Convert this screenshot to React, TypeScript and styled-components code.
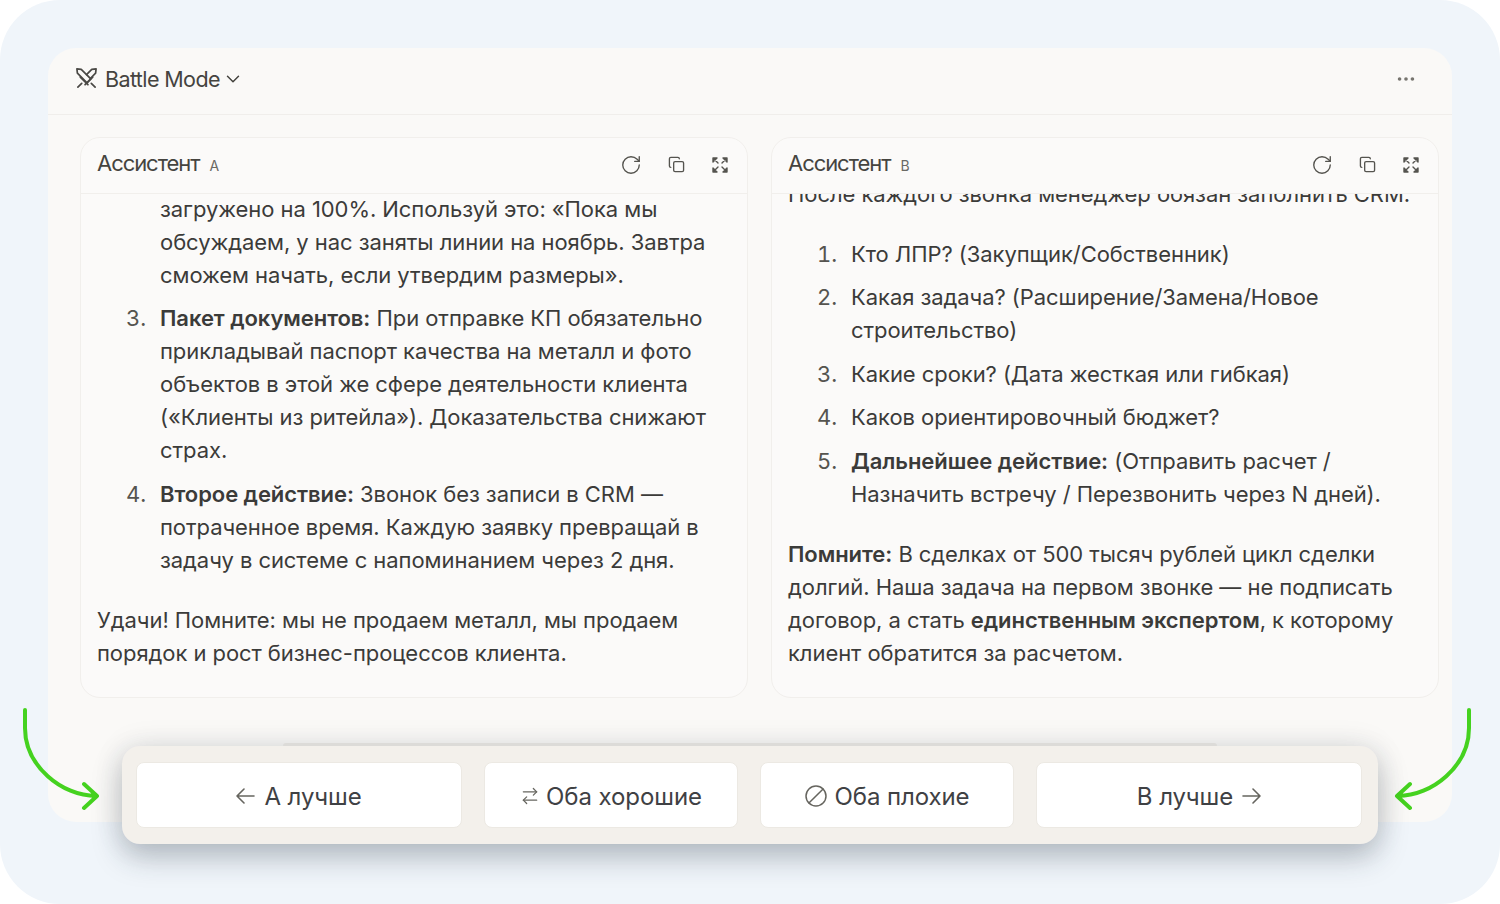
import styled, { createGlobalStyle } from 'styled-components';
import { ArrowRightLeft, Ban, ChevronDown, Copy, Ellipsis, RotateCw } from 'lucide-react';

const GlobalStyle = createGlobalStyle`
  html, body {
    margin: 0;
    padding: 0;
    height: 100%;
    background: #ffffff;
  }
  body {
    font-family: Inter, "Noto Sans", sans-serif;
    color: #3b3b39;
  }
`;

const Backdrop = styled.div`
  position: relative;
  width: 1500px;
  height: 904px;
  box-sizing: border-box;
  padding: 48px 48px 82px;
  background: #f0f5fa;
  border-radius: 60px;
  overflow: hidden;
`;

const Window = styled.div`
  height: 774px;
  background: #faf9f7;
  border-radius: 28px;
  overflow: hidden;
`;

const TopBar = styled.div`
  display: flex;
  align-items: center;
  justify-content: space-between;
  height: 67px;
  box-sizing: border-box;
  padding: 0 35px 5px 27px;
  border-bottom: 1px solid #f0eeeb;
`;

const ModeTitle = styled.div`
  display: flex;
  align-items: center;
  font-size: 21.5px;
  letter-spacing: -0.6px;
  color: #45443f;
  svg { flex: none; }
`;

const ModeLabel = styled.span`
  margin: 0 2px 0 7px;
`;

const Panels = styled.div`
  display: grid;
  grid-template-columns: 668px 668px;
  gap: 23px;
  padding: 22px 14px 0 32px;
`;

const Panel = styled.section`
  display: flex;
  flex-direction: column;
  height: 561px;
  box-sizing: border-box;
  background: #fbfaf9;
  border: 1px solid #f1efec;
  border-radius: 20px;
  overflow: hidden;
`;

const PanelHead = styled.header`
  display: flex;
  align-items: center;
  justify-content: space-between;
  flex: none;
  height: 56px;
  box-sizing: border-box;
  padding: 0 18px 2px 16px;
  border-bottom: 1px solid #f1efec;
`;

const PanelName = styled.div`
  display: flex;
  align-items: baseline;
  gap: 10px;
  padding-bottom: 4px;
  font-size: 22px;
  letter-spacing: -1.05px;
  color: #45443f;
`;

const PanelLetter = styled.span`
  font-size: 14px;
  letter-spacing: 0;
  color: #6a6964;
`;

const PanelTools = styled.div`
  display: flex;
  align-items: center;
  gap: 26px;
  color: #55544f;
`;

const PanelBody = styled.div`
  flex: 1;
  min-height: 0;
  display: flex;
  flex-direction: column;
  justify-content: flex-end;
  box-sizing: border-box;
  padding: 0 16px 27px;
  overflow: hidden;
  font-size: 22px;
  line-height: 33px;
  letter-spacing: -0.06px;
  b { font-weight: 600; }
`;

const Paragraph = styled.p`
  margin: 0;
  flex: none;
`;

const Steps = styled.ol`
  flex: none;
  margin: 27px 0;
  padding: 0 0 0 55px;
`;

const Step = styled.li`
  padding-left: 8px;
  & + & {
    margin-top: 10.6px;
  }
  &::marker {
    color: #55544f;
  }
`;

const VoteBar = styled.div`
  position: absolute;
  left: 122px;
  top: 746px;
  width: 1256px;
  height: 98px;
  box-sizing: border-box;
  display: grid;
  grid-template-columns: 326px 254px 254px 326px;
  gap: 22px;
  padding: 16px 16px 16px 14px;
  background: #f3f0eb;
  border-radius: 18px;
  box-shadow: 0 0 30px rgba(40, 50, 60, 0.1), 0 13px 30px rgba(30, 45, 60, 0.27);

  &::before {
    content: '';
    position: absolute;
    left: 161px;
    right: 161px;
    top: -3px;
    height: 3px;
    border-radius: 4px 4px 0 0;
    background: #dcdbd8;
  }
`;

const VoteButton = styled.button<{ $tight?: boolean }>`
  display: flex;
  align-items: center;
  justify-content: center;
  gap: ${(p) => (p.$tight ? '6px' : '9px')};
  padding: 2px 0 0;
  background: #ffffff;
  border: 1.5px solid #ece9e3;
  border-radius: 8px;
  font-family: inherit;
  font-size: 24px;
  letter-spacing: -0.08px;
  color: #3f4144;
  svg { color: #66655f; flex: none; }
`;

const MirroredBan = styled(Ban)`
  transform: scaleX(-1);
`;

const CurvedArrow = styled.svg<{ $right?: boolean }>`
  position: absolute;
  top: 706px;
  left: ${(p) => (p.$right ? '1392px' : '22px')};
  transform: ${(p) => (p.$right ? 'scaleX(-1)' : 'none')};
`;

function GreenArrow({ right }: { right?: boolean }) {
  return (
    <CurvedArrow $right={right} width="80" height="106" viewBox="0 0 80 106" fill="none">
      <path
        d="M3 4 V22 C3 60 40 90 74 90 M62 78 L75 90 L62 102"
        stroke="#45d21f"
        strokeWidth="4"
        strokeLinecap="round"
        strokeLinejoin="round"
      />
    </CurvedArrow>
  );
}

function SwordsIcon() {
  return (
    <svg width="23" height="23" viewBox="0 0 24 24" fill="none" stroke="#4a4945" strokeWidth="1.8" strokeLinejoin="round" strokeLinecap="round">
      <path d="M2 2 L6.5 2.5 L16.5 12.5 L12.5 16.5 L2.5 6.5 Z" />
      <path d="M22 2 L17.5 2.5 L12 8 M16 12 L21.5 6.5 L22 2" />
      <path d="M10.5 18.5 L18.5 10.5 M17 17 L21 21" />
      <path d="M5.5 10.5 L13.5 18.5 M7 17 L3 21" />
    </svg>
  );
}

function ExpandIcon() {
  return (
    <svg width="18" height="18" viewBox="0 0 18 18" fill="#55544f" stroke="#55544f" strokeWidth="1.4" strokeLinecap="round" strokeLinejoin="round">
      <path d="M2 2 H6 L2 6 Z M3 3 L7 7" />
      <path d="M16 2 H12 L16 6 Z M15 3 L11 7" />
      <path d="M2 16 H6 L2 12 Z M3 15 L7 11" />
      <path d="M16 16 H12 L16 12 Z M15 15 L11 11" />
    </svg>
  );
}

function LongArrow({ right }: { right?: boolean }) {
  return (
    <svg width="19" height="16" viewBox="0 0 19 16" fill="none" stroke="currentColor" strokeWidth="1.6" strokeLinecap="round" strokeLinejoin="round">
      <path d={right ? 'M1 8 H18 M11 1 L18 8 L11 15' : 'M18 8 H1 M8 1 L1 8 L8 15'} />
    </svg>
  );
}

function PanelHeader({ letter }: { letter: string }) {
  return (
    <PanelHead>
      <PanelName>
        Ассистент <PanelLetter>{letter}</PanelLetter>
      </PanelName>
      <PanelTools>
        <RotateCw size={22} strokeWidth={1.5} />
        <Copy size={17} strokeWidth={1.9} />
        <ExpandIcon />
      </PanelTools>
    </PanelHead>
  );
}

export default function App() {
  return (
    <Backdrop>
      <GlobalStyle />
      <Window>
        <TopBar>
          <ModeTitle>
            <SwordsIcon />
            <ModeLabel>Battle Mode</ModeLabel>
            <ChevronDown size={22} strokeWidth={1.6} />
          </ModeTitle>
          <Ellipsis size={22} color="#77756f" />
        </TopBar>
        <Panels>
          <Panel>
            <PanelHeader letter="A" />
            <PanelBody>
              <Steps start={2}>
                <Step>
                  &nbsp;
                  <br />
                  загружено на 100%. Используй это: «Пока мы обсуждаем, у нас заняты линии на ноябрь. Завтра сможем
                  начать, если утвердим размеры».
                </Step>
                <Step>
                  <b>Пакет документов:</b> При отправке КП обязательно прикладывай паспорт качества на металл и фото
                  объектов в этой же сфере деятельности клиента («Клиенты из ритейла»). Доказательства снижают страх.
                </Step>
                <Step>
                  <b>Второе действие:</b> Звонок без записи в CRM — потраченное время. Каждую заявку превращай в задачу
                  в системе с напоминанием через 2 дня.
                </Step>
              </Steps>
              <Paragraph>
                Удачи! Помните: мы не продаем металл, мы продаем порядок и рост бизнес-процессов клиента.
              </Paragraph>
            </PanelBody>
          </Panel>
          <Panel>
            <PanelHeader letter="B" />
            <PanelBody>
              <Paragraph>После каждого звонка менеджер обязан заполнить CRM:</Paragraph>
              <Steps>
                <Step>Кто ЛПР? (Закупщик/Собственник)</Step>
                <Step>Какая задача? (Расширение/Замена/Новое строительство)</Step>
                <Step>Какие сроки? (Дата жесткая или гибкая)</Step>
                <Step>Каков ориентировочный бюджет?</Step>
                <Step>
                  <b>Дальнейшее действие:</b> (Отправить расчет / Назначить встречу / Перезвонить через N дней).
                </Step>
              </Steps>
              <Paragraph>
                <b>Помните:</b> В сделках от 500 тысяч рублей цикл сделки долгий. Наша задача на первом звонке — не
                подписать договор, а стать <b>единственным экспертом</b>, к которому клиент обратится за расчетом.
              </Paragraph>
            </PanelBody>
          </Panel>
        </Panels>
      </Window>
      <GreenArrow />
      <GreenArrow right />
      <VoteBar>
        <VoteButton>
          <LongArrow />А лучше
        </VoteButton>
        <VoteButton $tight>
          <ArrowRightLeft size={20} strokeWidth={1.5} />
          Оба хорошие
        </VoteButton>
        <VoteButton $tight>
          <MirroredBan size={24} strokeWidth={1.5} />
          Оба плохие
        </VoteButton>
        <VoteButton>
          В лучше
          <LongArrow right />
        </VoteButton>
      </VoteBar>
    </Backdrop>
  );
}
